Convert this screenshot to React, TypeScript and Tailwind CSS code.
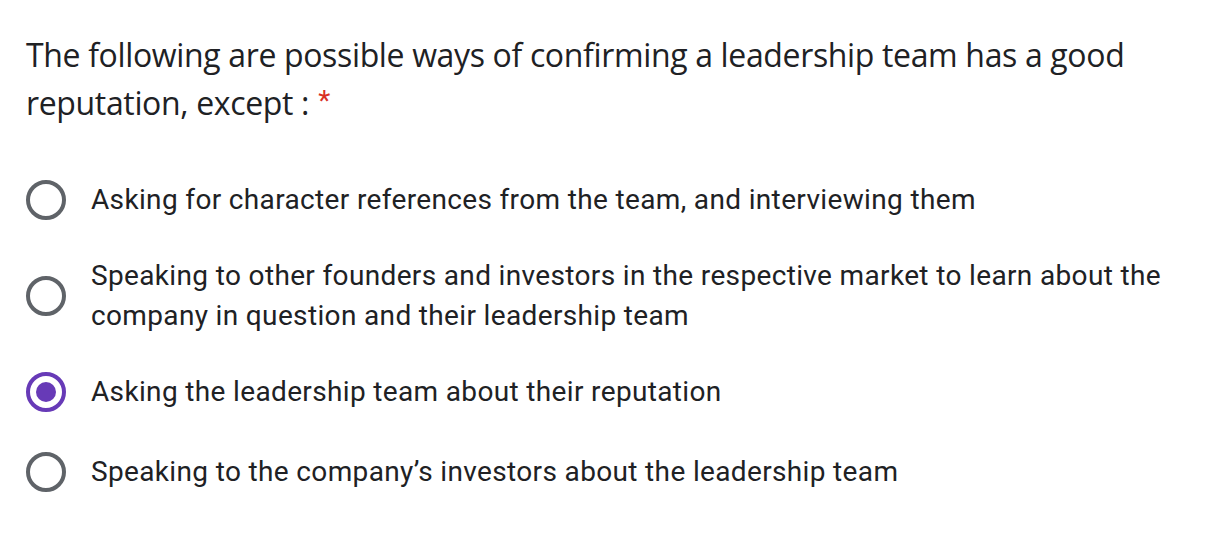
import React from "react";

const options = [
  "Asking for character references from the team, and interviewing them",
  "Speaking to other founders and investors in the respective market to learn about the company in question and their leadership team",
  "Asking the leadership team about their reputation",
  "Speaking to the company\u2019s investors about the leadership team",
];

const Radio: React.FC<{ checked: boolean }> = ({ checked }) => (
  <div
    className={
      "w-[40px] h-[40px] shrink-0 rounded-full border-[4px] flex items-center justify-center " +
      (checked ? "border-[#673ab7]" : "border-[#5f6368]")
    }
  >
    {checked && <div className="w-[20px] h-[20px] rounded-full bg-[#673ab7]" />}
  </div>
);

export default function App() {
  const selected = 2;

  return (
    <div className="w-[1232px] h-[544px] bg-white pl-[26px] pt-[31px] text-[#202124]">
      <h1
        className="w-[1150px] text-[32px] leading-[48px] font-normal tracking-[-0.35px]"
        style={{ fontFamily: '"Open Sans", sans-serif' }}
      >
        The following are possible ways of confirming a leadership team has a good reputation, except :
        <span
          className="inline-block align-top mt-[8px] ml-[9px] text-[28px] leading-[28px] tracking-normal text-[#d93025]"
          style={{ fontFamily: "Roboto, sans-serif" }}
        >
          *
        </span>
      </h1>

      <div
        className="mt-[53px] flex flex-col gap-[36px] w-[1160px]"
        style={{ fontFamily: "Roboto, sans-serif" }}
      >
        {options.map((text, i) => (
          <label
            key={i}
            className={"flex items-center gap-[25px] " + (i === 3 ? "mt-[4px]" : "")}
          >
            <Radio checked={i === selected} />
            <span className="text-[28px] leading-[40px] tracking-[0.35px]">{text}</span>
          </label>
        ))}
      </div>
    </div>
  );
}
